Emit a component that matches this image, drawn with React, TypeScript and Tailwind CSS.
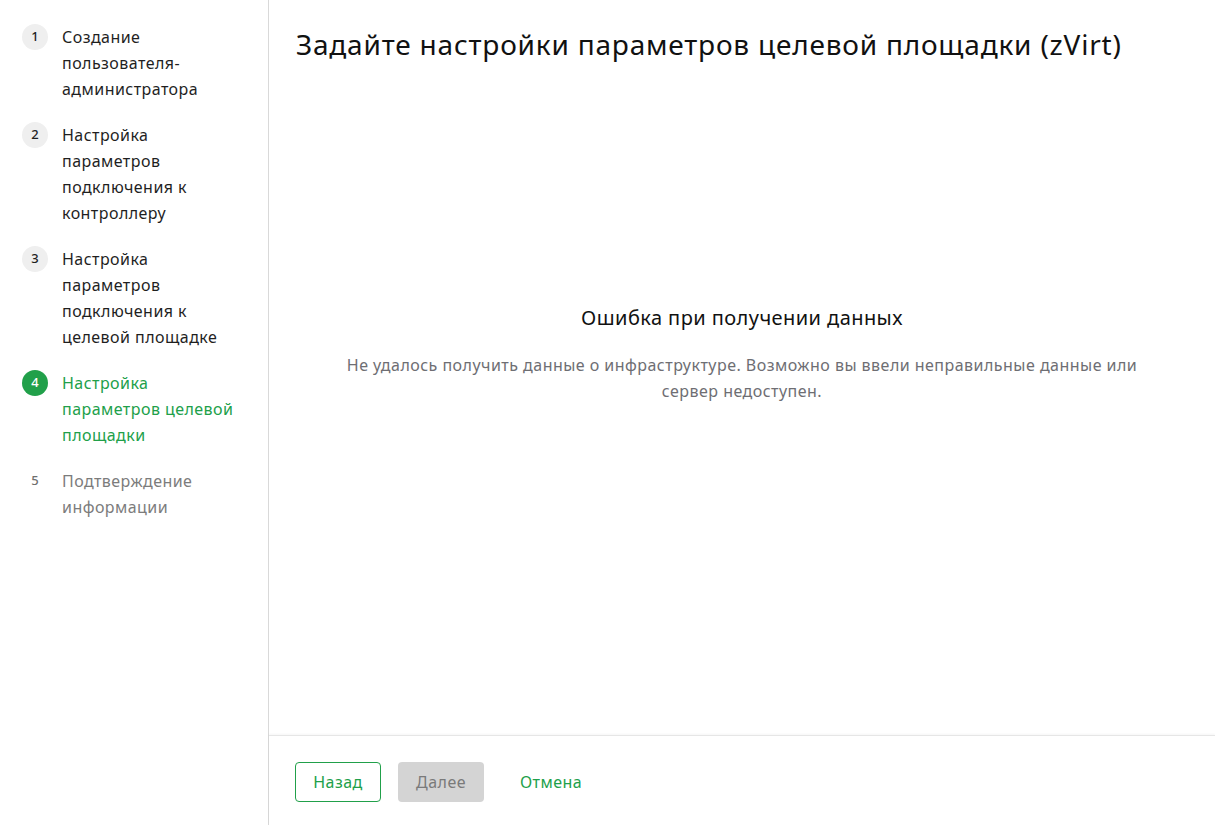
const steps = [
  { n: 1, label: "Создание пользователя-администратора", state: "done" },
  { n: 2, label: "Настройка параметров подключения к контроллеру", state: "done" },
  { n: 3, label: "Настройка параметров подключения к целевой площадке", state: "done" },
  { n: 4, label: "Настройка параметров целевой площадки", state: "active" },
  { n: 5, label: "Подтверждение информации", state: "todo" },
];

function Step({ n, label, state }: { n: number; label: string; state: string }) {
  const circle =
    state === "active"
      ? "bg-[#21a04a] text-white"
      : state === "done"
        ? "bg-[#efefef] text-[#1f1f1f]"
        : "text-[#6f6f6f]";
  const text =
    state === "active" ? "text-[#21a04a]" : state === "done" ? "text-[#1f1f1f]" : "text-[#7c7c7c]";
  return (
    <li className="flex gap-[14px]">
      <span
        className={`flex h-[26px] w-[26px] shrink-0 items-center justify-center rounded-full text-[13px] font-medium ${circle}`}
      >
        {n}
      </span>
      <span className={`w-[185px] text-[16px] leading-[26px] tracking-[0.45px] ${text}`}>{label}</span>
    </li>
  );
}

export default function App() {
  return (
    <div className="flex h-[825px] w-full bg-white font-['Noto_Sans',sans-serif]">
      {/* Sidebar */}
      <aside className="w-[269px] shrink-0 border-r border-[#d9d9d9] pl-[22px] pt-[24px]">
        <ol className="flex flex-col gap-[20px]">
          {steps.map((s) => (
            <Step key={s.n} {...s} />
          ))}
        </ol>
      </aside>

      {/* Main */}
      <main className="flex flex-1 flex-col">
        <div className="flex-1 px-[27px] pt-[26px]">
          <h1 className="text-[28px] leading-[36px] tracking-[0.8px] text-[#111]">
            Задайте настройки параметров целевой площадки (zVirt)
          </h1>
          <div className="mt-[242px] flex flex-col items-center text-center">
            <h2 className="text-[20px] leading-[28px] tracking-[0.43px] text-[#111]">Ошибка при получении данных</h2>
            <p className="mt-[20px] max-w-[820px] text-[16px] leading-[26px] tracking-[0.47px] text-[#6e6e73]">
              Не удалось получить данные о инфраструктуре. Возможно вы ввели неправильные данные или
              сервер недоступен.
            </p>
          </div>
        </div>
        <footer className="flex h-[90px] items-start gap-[17px] border-t border-[#e6e6e6] px-[26px] pt-[26px] shadow-[0_-1px_2px_rgba(0,0,0,0.04)]">
          <button className="h-[40px] w-[86px] rounded-[4px] border border-[#21a04a] text-[16px] tracking-[0.45px] text-[#21a04a]">
            Назад
          </button>
          <button className="h-[40px] w-[86px] rounded-[4px] bg-[#d4d4d4] text-[16px] tracking-[0.45px] text-[#7a7a7a]">
            Далее
          </button>
          <button className="h-[40px] w-[100px] rounded-[4px] text-[16px] tracking-[0.45px] text-[#21a04a]">Отмена</button>
        </footer>
      </main>
    </div>
  );
}
